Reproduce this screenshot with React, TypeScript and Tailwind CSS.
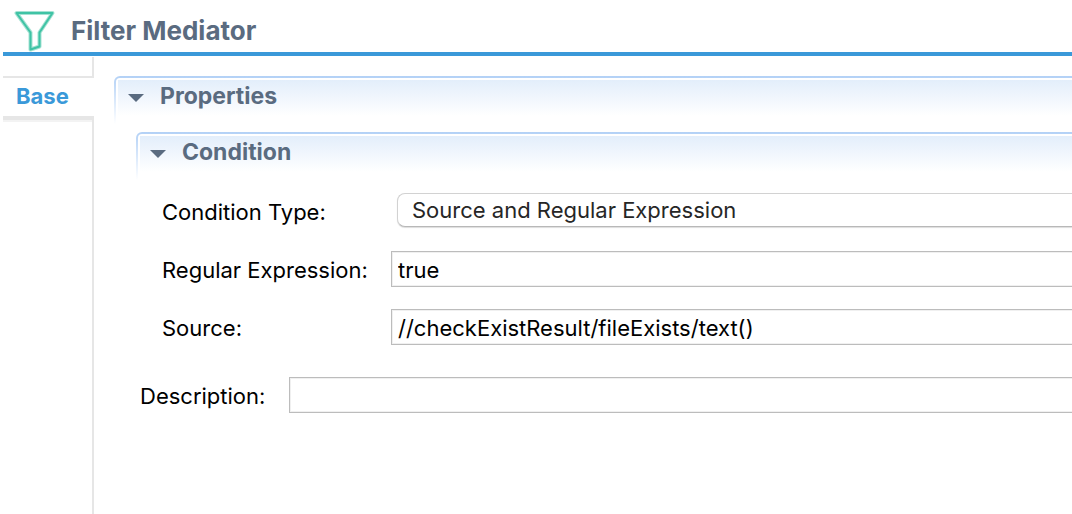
import { useState, type ReactNode } from "react";

const textBox =
  "h-9 w-full min-w-0 border border-r-0 border-[#bcbcbc] bg-white px-1.5 pt-0.5 text-[22px] text-black shadow-[inset_1px_1px_0_#f0f0f0,inset_0_-1px_0_#f0f0f0] outline-none";

const fieldLabel = "pt-0.5";

function FunnelIcon() {
  return (
    <svg viewBox="0 0 44 44" className="h-11 w-11 shrink-0" fill="none" aria-hidden="true">
      <path
        d="M5.5 5H41.5L28.5 24.5V38.5L19.5 41.5V24.5Z"
        stroke="#a5e2d3"
        strokeWidth="4"
        strokeLinejoin="round"
      />
      <path
        d="M5.5 5H41.5L28.5 24.5V38.5L19.5 41.5V24.5Z"
        stroke="#3fc3a5"
        strokeWidth="2"
        strokeLinejoin="round"
      />
    </svg>
  );
}

function Section({ title, children }: { title: string; children: ReactNode }) {
  const [open, setOpen] = useState(true);
  return (
    <section>
      <div className="h-12 rounded-tl-md bg-linear-to-b from-[#b3d1f6] to-white pt-0.5 pl-0.5">
        <div className="h-full rounded-tl-sm bg-white pt-0.5 pl-0.5">
          <button
            type="button"
            aria-expanded={open}
            onClick={() => setOpen(!open)}
            className="flex h-9 w-full items-center gap-4 bg-linear-to-b from-[#e3eefb] to-white pl-2.5 text-left text-[23px] leading-8 font-bold text-[#5a6b80]"
          >
            <svg
              viewBox="0 0 16 8"
              className={open ? "h-2 w-4" : "h-2 w-4 -rotate-90"}
              fill="#5a6b80"
              aria-hidden="true"
            >
              <path d="M0 0H16L8 8Z" />
            </svg>
            <span className="pb-1">{title}</span>
          </button>
        </div>
      </div>
      {open && children}
    </section>
  );
}

export default function App() {
  return (
    <div className="flex min-h-screen flex-col overflow-hidden bg-white pl-[3px] font-['Inter','Liberation_Sans',sans-serif] text-[22px] leading-8 text-black">
      <header className="flex h-14 items-center gap-4 border-b-4 border-[#3a99d9] pt-2 pl-2">
        <FunnelIcon />
        <h1 className="pt-0.5 text-[26px] font-bold text-[#5a6b80]">Filter Mediator</h1>
      </header>
      <div className="flex grow pt-px">
        <nav className="flex w-[91px] shrink-0 flex-col">
          <div className="h-[19px] border-r-2 border-[#e6e6e6]" />
          <button
            type="button"
            className="h-11 border-t-2 border-b-4 border-[#e6e6e6] pb-0.5 pl-[13px] text-left font-bold text-[#3a99d9] shadow-[0_2px_0_#f3f3f3]"
          >
            Base
          </button>
          <div className="grow border-r-2 border-[#e6e6e6]" />
        </nav>
        <main className="min-w-0 grow pt-[19px] pl-5">
          <Section title="Properties">
            <div className="pt-2 pl-[22px]">
              <Section title="Condition">
                <div className="grid grid-cols-[229px_minmax(0,1fr)] items-center gap-y-[22px] pt-[13px] pl-[26px]">
                  <label htmlFor="condition-type" className={fieldLabel}>Condition Type:</label>
                  <div className="h-9 pl-1.5">
                    <select
                      id="condition-type"
                      className="h-[34px] w-full appearance-none rounded-l-lg border border-r-0 border-[#d2d2d2] border-b-[#b8b8b8] bg-white px-3.5 text-[22px] text-[#262626] shadow-[0_1px_1px_#dddddd] outline-none"
                    >
                      <option>Source and Regular Expression</option>
                    </select>
                  </div>
                  <label htmlFor="regex" className={fieldLabel}>Regular Expression:</label>
                  <input id="regex" className={textBox} defaultValue="true" />
                  <label htmlFor="source" className={fieldLabel}>Source:</label>
                  <input
                    id="source"
                    className={textBox}
                    defaultValue="//checkExistResult/fileExists/text()"
                  />
                </div>
              </Section>
              <div className="grid grid-cols-[149px_minmax(0,1fr)] items-center pt-8 pl-1">
                <label htmlFor="description" className={fieldLabel}>Description:</label>
                <input id="description" className={textBox} />
              </div>
            </div>
          </Section>
        </main>
      </div>
    </div>
  );
}
